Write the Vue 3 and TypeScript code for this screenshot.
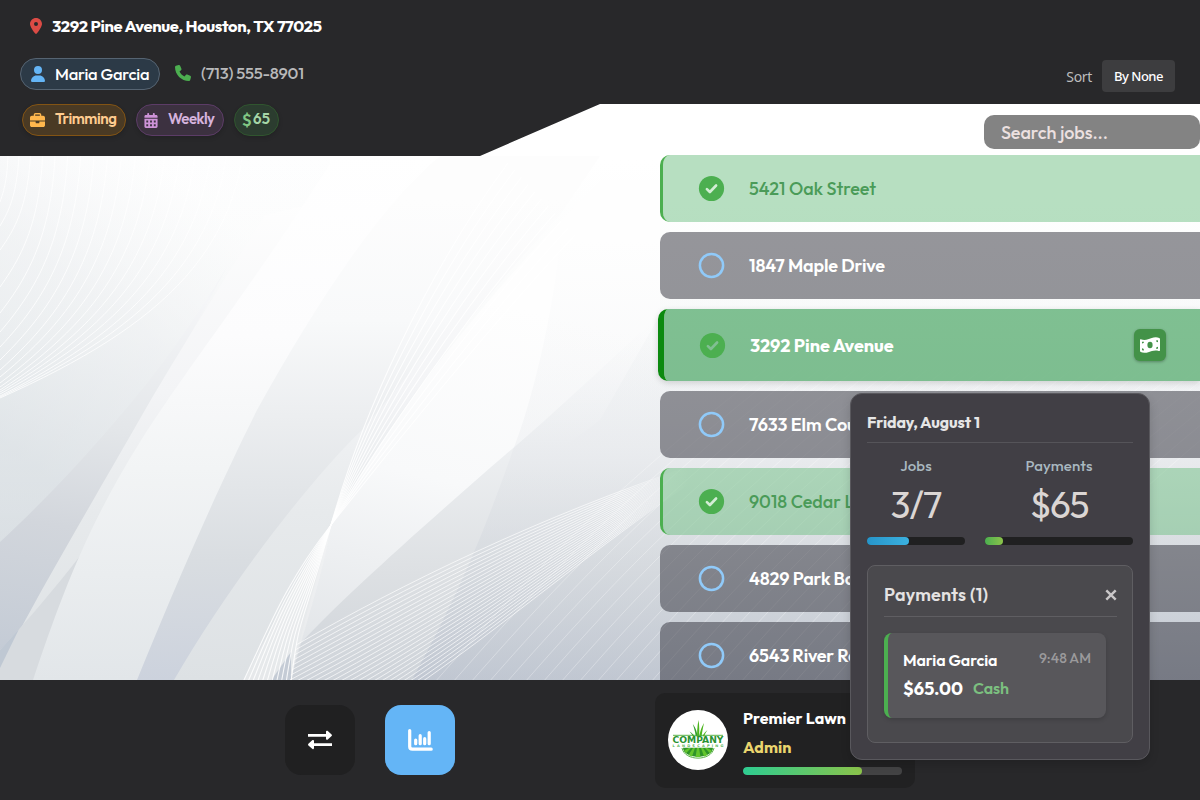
<script setup lang="ts">
interface Job {
  address: string
  width: number
  state: 'done' | 'open' | 'active'
}

const jobs: Job[] = [
  { address: '5421 Oak Street', width: 127, state: 'done' },
  { address: '1847 Maple Drive', width: 136, state: 'open' },
  { address: '3292 Pine Avenue', width: 143.5, state: 'active' },
  { address: '7633 Elm Court', width: 122, state: 'open' },
  { address: '9018 Cedar Lane', width: 135, state: 'done' },
  { address: '4829 Park Boulevard', width: 166, state: 'open' },
  { address: '6543 River Road', width: 130, state: 'open' },
]

// Spreads letter-spacing so that a label takes up the given width.
const vFit = {
  mounted(el: HTMLElement, binding: { value: number }) {
    const count = (el.textContent ?? '').trim().length
    const natural = el.getBoundingClientRect().width
    if (count > 1) {
      el.style.letterSpacing = `${((binding.value - natural) / (count - 1)).toFixed(3)}px`
    }
  },
}

const lerp = (a: number, b: number, t: number): number => a + (b - a) * t
const series = (n: number): number[] => Array.from({ length: n }, (_, i) => i / (n - 1))

// Arcs hanging from the header and gathering on the left edge.
const arcEnds = [202, 226, 250, 287, 313, 332, 347, 360, 370, 377, 383, 387, 390, 392, 394, 396, 397, 398]
const arcs = arcEnds.map((end, i) => {
  const x = 7 + i * 11.5 + i * i * 0.15
  const drop = end - 156
  return `M${x},100 C${x + 4},${156 + drop * 0.38} ${x * 0.66},${156 + drop * 0.7} 0,${end}`
})

// Twisted ribbon crossing itself near the middle of the field.
const ribbon = series(11).map((t) => {
  const tx = lerp(508, 575, t)
  const ty = lerp(163, 235, t)
  const bx = lerp(291, 243, t)
  return `M${tx},${ty} C${lerp(425, 490, t)},${lerp(275, 325, t)} ${lerp(362, 378, t)},${lerp(415, 465, t)} 331,525 S${lerp(300, 268, t)},${lerp(610, 630, t)} ${bx},682`
})

// Dense mesh sweeping from the lower left towards the list.
const mesh = series(25).map((t) => {
  const y = lerp(645, 765, t)
  return `M${lerp(296, 275, t)},${y} C${lerp(400, 425, t)},${lerp(585, 700, t)} ${lerp(540, 520, t)},${lerp(516, 600, t)} 700,${lerp(463, 476, t)}`
})

const rays = Array.from({ length: 30 }, (_, i) => {
  const x = 435 + i * 18
  return `M${x},682 C${x + 85},585 ${x + 170},495 ${x + 330},370`
})

const blades = [
  'M29.600 32C28.500 24 29.300 16 30.500 10C31.500 16 31.500 25 30.800 32Z',
  'M28.500 32C28 25 26.500 19 24.800 14C28.600 19 30.300 26 29.900 32Z',
  'M31 32C31 24 33 18 36 13C34.500 19 33.600 26 32.800 32Z',
  'M27 32C26.500 28 24 24 21.500 21.500C26 24 28 28 28.800 32Z',
  'M33 32C33.500 27 35.500 23 39.500 20C36.500 24 35.200 28 34.800 32Z',
  'M25.500 32C24.500 30 22.800 28.500 20.500 27.500C24.500 28 26.500 30 27.200 32Z',
]
</script>

<template>
  <div class="app">
    <svg class="backdrop" viewBox="0 0 1200 800" aria-hidden="true">
      <defs>
        <linearGradient id="base" x1="0" y1="0" x2="0" y2="1">
          <stop offset="0.2" stop-color="#ffffff" />
          <stop offset="0.42" stop-color="#fafbfb" />
          <stop offset="0.6" stop-color="#eaecef" />
          <stop offset="0.85" stop-color="#cdd1d8" />
        </linearGradient>
        <linearGradient id="left" gradientUnits="userSpaceOnUse" x1="0" y1="440" x2="190" y2="190">
          <stop offset="0" stop-color="#d6dde1" stop-opacity="0.6" />
          <stop offset="0.55" stop-color="#e6e9ec" stop-opacity="0.5" />
          <stop offset="1" stop-color="#f0f2f4" stop-opacity="0.1" />
        </linearGradient>
        <linearGradient id="dark" gradientUnits="userSpaceOnUse" x1="0" y1="200" x2="0" y2="680">
          <stop offset="0" stop-color="#fdfdfd" />
          <stop offset="0.25" stop-color="#f8f9fa" />
          <stop offset="0.45" stop-color="#eceef0" />
          <stop offset="0.75" stop-color="#d9dde1" />
          <stop offset="1" stop-color="#ccd2dd" />
        </linearGradient>
        <linearGradient id="mid" gradientUnits="userSpaceOnUse" x1="0" y1="200" x2="0" y2="680">
          <stop offset="0" stop-color="#fefefe" />
          <stop offset="0.4" stop-color="#f3f4f6" />
          <stop offset="0.65" stop-color="#e7eaec" />
          <stop offset="1" stop-color="#dde1e4" />
        </linearGradient>
        <linearGradient id="pale" gradientUnits="userSpaceOnUse" x1="0" y1="150" x2="0" y2="680">
          <stop offset="0" stop-color="#ffffff" />
          <stop offset="0.35" stop-color="#fcfcfd" />
          <stop offset="0.6" stop-color="#f2f4f5" />
          <stop offset="1" stop-color="#e2e6e9" />
        </linearGradient>
        <linearGradient id="glow" gradientUnits="userSpaceOnUse" x1="480" y1="300" x2="400" y2="660">
          <stop offset="0" stop-color="#fefefe" />
          <stop offset="0.5" stop-color="#f8f9fa" />
          <stop offset="1" stop-color="#e3e6e9" />
        </linearGradient>
        <linearGradient id="lower" gradientUnits="userSpaceOnUse" x1="0" y1="320" x2="0" y2="680">
          <stop offset="0" stop-color="#f9fafb" stop-opacity="0" />
          <stop offset="0.35" stop-color="#eef0f2" />
          <stop offset="0.7" stop-color="#dde0e3" />
          <stop offset="1" stop-color="#ced3d9" />
        </linearGradient>
        <linearGradient id="shade" gradientUnits="userSpaceOnUse" x1="60" y1="280" x2="0" y2="680">
          <stop offset="0" stop-color="#f5f6f8" />
          <stop offset="0.35" stop-color="#e3e6e9" />
          <stop offset="0.6" stop-color="#d2d6dc" />
          <stop offset="1" stop-color="#c1c9d4" />
        </linearGradient>
        <linearGradient id="fall" gradientUnits="userSpaceOnUse" x1="0" y1="240" x2="0" y2="680">
          <stop offset="0" stop-color="#e2e5e9" stop-opacity="0" />
          <stop offset="0.5" stop-color="#dcdfe4" stop-opacity="0.25" />
          <stop offset="0.75" stop-color="#c9cfd7" stop-opacity="0.4" />
          <stop offset="1" stop-color="#b3bbca" stop-opacity="0.5" />
        </linearGradient>
        <linearGradient id="fade" gradientUnits="userSpaceOnUse" x1="620" y1="0" x2="690" y2="0">
          <stop offset="0" stop-color="#ffffff" />
          <stop offset="1" stop-color="#ffffff" stop-opacity="0" />
        </linearGradient>
      </defs>
      <rect width="1200" height="800" fill="url(#base)" />
      <rect width="330" height="560" fill="url(#left)" />
      <path d="M228,265C195,320 158,372 125,410C85,458 40,505 0,542V680H35L150,410Z" fill="url(#shade)" />
      <path d="M265,215C230,270 180,350 145,410C85,515 40,590 0,668V680H60L330,200Z" fill="url(#mid)" />
      <path d="M80,556C55,588 30,618 0,650V680H36Z" fill="#d7dbdf" />
      <path d="M19,629L0,650V668Z" fill="#bfc8d3" />
      <path d="M335,156C250,290 185,370 140,442C85,530 60,600 33,680H150L420,156Z" fill="url(#pale)" />
      <path d="M440,156C375,210 310,315 257,410C205,515 170,600 137,680H250L331,525C380,435 470,310 560,215L600,156Z" fill="url(#dark)" />
      <path d="M500,250C450,325 405,380 362,430C315,475 235,575 174,680H300L331,525C380,435 470,310 560,215Z" fill="url(#mid)" />
      <path d="M600,180C470,310 380,435 331,525C318,575 306,615 299,645L600,420L660,315V180Z" fill="url(#glow)" />
      <path d="M299,645C340,600 430,520 505,455C570,400 620,350 660,315H1200V680H290Z" fill="url(#lower)" />
      <path d="M560,240C555,300 535,395 513,450C480,545 450,610 412,680H1200V240Z" fill="url(#fall)" />
      <path d="M243,682C265,640 290,590 331,525C325,570 300,640 291,682Z" fill="#f5f6f7" opacity="0.35" />
      <path d="M291,652L270,682H291Z" fill="#c4cbd5" />
      <g fill="none" stroke="#ffffff">
        <path v-for="(d, i) in arcs" :key="`a${i}`" :d="d" stroke-width="1" opacity="0.8" />
        <path v-for="(d, i) in ribbon" :key="`r${i}`" :d="d" stroke-width="1.1" opacity="0.85" />
        <path v-for="(d, i) in mesh" :key="`m${i}`" :d="d" stroke="url(#fade)" stroke-width="0.9" opacity="0.75" />
        <path v-for="(d, i) in rays" :key="`y${i}`" :d="d" stroke-width="0.8" opacity="0.38" />
      </g>
    </svg>

    <header class="header">
      <div class="client">
        <div class="address">
          <svg class="pin" viewBox="0 0 384 512"><path fill="#db4b45" d="M215.700 499.200C267 435 384 279.400 384 192C384 86 298 0 192 0S0 86 0 192c0 87.400 117 243 168.300 307.200c12.300 15.300 35.100 15.300 47.400 0zM192 128a64 64 0 1 1 0 128 64 64 0 1 1 0-128z" /></svg>
          <span v-fit="270" class="label">3292 Pine Avenue, Houston, TX 77025</span>
        </div>
        <div class="contact">
          <div class="pill person">
            <svg class="user" viewBox="0 0 448 512"><path fill="#64b5f6" d="M224 256A128 128 0 1 0 224 0a128 128 0 1 0 0 256zm-45.700 48C79.800 304 0 383.800 0 482.300C0 498.700 13.300 512 29.700 512H418.300c16.400 0 29.700-13.300 29.700-29.700C448 383.800 368.200 304 269.700 304H178.300z" /></svg>
            <span v-fit="94.5" class="label">Maria Garcia</span>
          </div>
          <div class="phone">
            <svg viewBox="0 0 512 512"><path fill="#4caf50" d="M164.900 24.600c-7.700-18.600-28-28.500-47.400-23.200l-88 24C12.100 30.200 0 46 0 64C0 311.400 200.600 512 448 512c18 0 33.800-12.100 38.600-29.500l24-88c5.300-19.400-4.600-39.700-23.200-47.400l-96-40c-16.300-6.800-35.200-2.100-46.300 11.600L304.700 368C234.300 334.700 177.300 277.700 144 207.300L193.300 167c13.700-11.200 18.400-30 11.600-46.300l-40-96z" /></svg>
            <span v-fit="103" class="label">(713) 555-8901</span>
          </div>
        </div>
        <div class="tags">
          <div class="pill tag trim">
            <svg class="case" viewBox="0 0 512 512"><path fill="#ffb74d" d="M184 48H328c4.400 0 8 3.600 8 8V96H176V56c0-4.400 3.600-8 8-8zm-56 8V96H64C28.700 96 0 124.700 0 160v96H192 320 512V160c0-35.300-28.700-64-64-64H384V56c0-30.900-25.100-56-56-56H184c-30.900 0-56 25.100-56 56zM512 288H320v32c0 17.700-14.300 32-32 32H224c-17.700 0-32-14.300-32-32V288H0V416c0 35.300 28.700 64 64 64H448c35.300 0 64-28.700 64-64V288z" /></svg>
            <span v-fit="62" class="label">Trimming</span>
          </div>
          <div class="pill tag week">
            <svg class="cal" viewBox="0 0 448 512"><path fill="#ce93d8" fill-rule="evenodd" d="M128 0c17.700 0 32 14.300 32 32V64H288V32c0-17.700 14.300-32 32-32s32 14.300 32 32V64h48c26.500 0 48 21.500 48 48v48H0V112C0 85.500 21.500 64 48 64H96V32c0-17.700 14.300-32 32-32zM0 192H448V464c0 26.500-21.500 48-48 48H48c-26.500 0-48-21.500-48-48ZM64 256v64h64v-64ZM192 256v64h64v-64ZM320 256v64h64v-64ZM64 384v64h64v-64ZM192 384v64h64v-64ZM320 384v64h64v-64Z" /></svg>
            <span v-fit="47" class="label">Weekly</span>
          </div>
          <div class="pill tag price">
            <span class="label currency">$</span>
            <span v-fit="17" class="label">65</span>
          </div>
        </div>
      </div>
      <div class="sort">
        <span v-fit="26" class="label">Sort</span>
        <button type="button"><span v-fit="49.5" class="label">By None</span></button>
      </div>
    </header>

    <main class="main">
      <section class="list">
        <div class="search"><span v-fit="107" class="label">Search jobs...</span></div>
        <article v-for="job in jobs" :key="job.address" :class="['job', job.state]">
          <svg class="status" viewBox="-0.5 -0.5 27 27">
            <template v-if="job.state === 'open'">
              <circle cx="13" cy="13" r="11.600" fill="none" stroke="#90caf9" stroke-width="2.500" />
            </template>
            <template v-else>
              <circle cx="13" cy="13" r="12.600" fill="#4caf50" />
              <path class="tick" d="M8.400 13.600L11.400 16.500L17.600 10" />
            </template>
          </svg>
          <span v-fit="job.width" class="label">{{ job.address }}</span>
          <span v-if="job.state === 'active'" class="cash">
            <svg viewBox="0 0 40 32">
              <path fill="#ffffff" d="M1.500 4.500C10 7.500 17 4.500 22 2.500C29 0 34 0 38.500 2C39.500 2.500 40 3 40 4V26C40 28 39 28.500 37.500 28C30 25.500 23 28 18 30C11 32.500 5 32 1.500 30C.5 29.500 0 29 0 28V6C0 4.500 .5 4 1.500 4.500Z" />
              <ellipse cx="20" cy="16" rx="5.200" ry="6.500" fill="#439248" />
              <path fill="#439248" d="M4 9.500h4c0 2-1.500 3.500-4 3.500zM36 6.500v4c-2.300 0-4-1.500-4-3.500zM4 22.500c2.500 0 4 1.800 4 4.500l-4-.5zM36 19.500v4h-4c0-2.300 1.700-4 4-4z" />
            </svg>
          </span>
        </article>
      </section>
    </main>

    <footer class="footer">
      <button class="tool" type="button" aria-label="Switch">
        <svg viewBox="0 0 24 20" width="24" height="20">
          <path d="M0 5.300H19M5 14.600H24" stroke="#ffffff" stroke-width="2.800" fill="none" />
          <path d="M18 1.800Q18 .3 19.500 .8L23.600 4.500Q24.300 5.300 23.600 6.100L19.500 9.700Q18 10.300 18 8.800ZM6 11.100Q6 9.600 4.500 10.100L.4 13.800Q-.3 14.600 .4 15.400L4.500 19Q6 19.600 6 18.100Z" fill="#ffffff" />
        </svg>
      </button>
      <button class="tool selected" type="button" aria-label="Statistics">
        <svg viewBox="0 0 25 22" width="25" height="22">
          <path d="M1.700 1.600V17.500Q1.700 20.200 4.400 20.200H23.200" stroke="#ffffff" stroke-width="3.200" stroke-linecap="round" fill="none" />
          <path d="M7.700 11V14.700M12.200 6.700V14.700M16.700 9.700V14.700M21.200 3.600V14.700" stroke="#ffffff" stroke-width="3.200" stroke-linecap="round" fill="none" />
        </svg>
      </button>
      <div class="account">
        <svg class="logo" viewBox="0 0 60 60">
          <circle cx="30" cy="30" r="30" fill="#ffffff" />
          <path v-for="(d, i) in blades" :key="i" :d="d" :fill="i % 2 ? '#2f9e2b' : '#4cb51d'" />
          <path d="M15 37.500H45A15 9.500 0 0 1 15 37.500Z" fill="#2f9428" />
          <path d="M29 38L27.500 47H32.500L31 38ZM25 38L20.500 45L24 46.500L27 38ZM35 38L39.500 45L36 46.500L33 38ZM21 38L16.300 40.500L18 43.300L23 38ZM39 38L43.700 40.500L42 43.300L37 38Z" fill="#63c52c" />
          <path d="M5 25.300H55M14 38C16.500 51.500 43.500 51.500 46 38" fill="none" stroke="#49ab35" stroke-width="0.900" />
          <rect x="4" y="26.300" width="52" height="11.200" fill="#ffffff" />
          <text class="brand" x="4.500" y="33" textLength="51" lengthAdjust="spacingAndGlyphs">COMPANY</text>
          <text class="trade" x="4.500" y="37.200" textLength="51">LANDSCAPING</text>
        </svg>
        <div class="who">
          <span v-fit="103" class="label">Premier Lawn</span>
          <span v-fit="48.5" class="label role">Admin</span>
          <div class="meter"><div class="meter-fill"></div></div>
        </div>
      </div>
    </footer>

    <aside class="popup">
      <h2><span v-fit="113" class="label">Friday, August 1</span></h2>
      <div class="stats">
        <div class="stat">
          <span v-fit="31.5" class="label caption">Jobs</span>
          <span v-fit="52" class="label value">3/7</span>
          <div class="bar"><div class="bar-fill jobs-fill"></div></div>
        </div>
        <div class="stat wide">
          <span v-fit="67" class="label caption">Payments</span>
          <span v-fit="60" class="label value">$65</span>
          <div class="bar"><div class="bar-fill pay-fill"></div></div>
        </div>
      </div>
      <div class="payments">
        <div class="payments-head">
          <span v-fit="104" class="label">Payments (1)</span>
          <svg class="close" viewBox="0 0 12 12"><path d="M1.300 1.300L10.700 10.700M10.700 1.300L1.300 10.700" /></svg>
        </div>
        <div class="payment">
          <div class="line">
            <span v-fit="94.5" class="label name">Maria Garcia</span>
            <span v-fit="52" class="label time">9:48 AM</span>
          </div>
          <div class="line second">
            <span v-fit="60" class="label amount">$65.00</span>
            <span v-fit="36" class="label method">Cash</span>
          </div>
        </div>
      </div>
    </aside>
  </div>
</template>

<style>
body {
  margin: 0;
  background: #28282a;
}
</style>

<style scoped>
.app {
  position: relative;
  display: flex;
  flex-direction: column;
  width: 1200px;
  height: 800px;
  overflow: hidden;
  font-family: Outfit, Lato, sans-serif;
  font-size: 16px;
  color: #fff;
}
.app * {
  box-sizing: border-box;
}
.label {
  display: inline-block;
  flex: none;
  align-self: center;
  white-space: nowrap;
}
.backdrop {
  position: absolute;
  inset: 0;
  width: 1200px;
  height: 800px;
}
.header {
  position: relative;
  z-index: 2;
  display: flex;
  justify-content: space-between;
  flex: none;
  height: 156px;
  margin-bottom: -52px;
  background: #28282a;
  clip-path: polygon(0 0, 100% 0, 100% 104px, 600px 104px, 480px 100%, 0 100%);
}
.client {
  padding: 14px 0 0 20px;
}
.address {
  display: flex;
  align-items: center;
  height: 24px;
  padding-left: 10px;
  gap: 10px;
  font-weight: 700;
  font-size: 16.500px;
}
.address .label,
.contact .label {
  margin-top: -2px;
}
.pin {
  width: 12px;
  height: 16px;
}
.contact {
  display: flex;
  align-items: center;
  height: 32px;
  margin-top: 20px;
  gap: 15px;
  font-size: 16.500px;
}
.pill {
  display: flex;
  align-items: center;
  height: 32px;
  padding-left: 10px;
  gap: 10px;
  border: 1px solid #566472;
  border-radius: 16px;
}
.person {
  width: 140px;
  background: #2c3a47;
  font-weight: 500;
}
.user {
  width: 14px;
  height: 16px;
}
.phone {
  display: flex;
  align-items: center;
  gap: 10px;
  margin-top: -2px;
  font-weight: 500;
  color: #b9b9ba;
}
.phone svg {
  width: 16px;
  height: 16px;
}
.tags {
  display: flex;
  margin: 14px 0 0 2px;
  gap: 10px;
  font-size: 15px;
  font-weight: 600;
}
.tag {
  padding-left: 7px;
  box-shadow: 0 2px 4px rgba(0, 0, 0, 0.15);
}
.tag .label {
  margin-top: -3px;
}
.trim {
  width: 104px;
  background: #4a3a24;
  border-color: #835414;
  color: #ffcc90;
}
.week {
  width: 88px;
  background: #3c3140;
  border-color: #5c3c67;
  color: #d6b3dd;
}
.price {
  width: 45px;
  gap: 3px;
  background: #2b3c2f;
  border-color: #30552f;
  color: #a5d6a7;
}
.price .currency {
  width: 8px;
  margin-top: -2px;
  font-size: 16.500px;
  color: #81c784;
}
.case {
  width: 15px;
  height: 15px;
}
.cal {
  width: 14px;
  height: 15px;
}
.sort {
  display: flex;
  align-items: center;
  height: 32px;
  margin: 60px 25px 0 0;
  gap: 10px;
  font-family: 'Noto Sans', sans-serif;
  font-size: 14px;
  color: #bdbdbe;
}
.sort button {
  width: 73px;
  height: 32px;
  padding: 0;
  border: 0;
  border-radius: 4px;
  background: #3d3d3f;
  font: 500 13px 'Noto Sans', sans-serif;
  color: #fff;
}
.main {
  position: relative;
  display: flex;
  justify-content: flex-end;
  flex: none;
  height: 576px;
  overflow: hidden;
}
.list {
  display: flex;
  flex-direction: column;
  width: 540px;
  padding-top: 11px;
}
.search {
  display: flex;
  align-items: center;
  align-self: flex-end;
  flex: none;
  width: 216px;
  height: 34px;
  margin-bottom: 6px;
  padding-left: 17px;
  border-radius: 10px;
  background: #838383;
  font-size: 18px;
  font-weight: 500;
  color: #ece0e0;
}
.job {
  display: flex;
  align-items: center;
  flex: none;
  height: 67px;
  margin-bottom: 10px;
  padding-left: 38px;
  border-radius: 10px 0 0 10px;
  background: rgba(49, 49, 59, 0.51);
  font-size: 18px;
  font-weight: 600;
}
.status {
  flex: none;
  width: 27px;
  height: 27px;
  margin-right: 24px;
}
.tick {
  fill: none;
  stroke: #d3edd5;
  stroke-width: 2.600;
  stroke-linecap: round;
  stroke-linejoin: round;
}
.done {
  padding-left: 35px;
  border-left: 3px solid #4caf50;
  background: rgba(111, 191, 131, 0.5);
  background-clip: padding-box;
  color: #4a9b58;
  font-weight: 500;
}
.active {
  height: 72px;
  margin-left: -2px;
  padding-left: 35px;
  border-left: 6px solid #0c8a10;
  background: rgba(76, 166, 101, 0.7);
  background-clip: padding-box;
  box-shadow: 0 2px 6px rgba(0, 0, 0, 0.15);
  font-weight: 700;
}
.active .tick {
  stroke: #80bf92;
}
.cash {
  display: flex;
  align-items: center;
  justify-content: center;
  width: 32px;
  height: 32px;
  margin: 0 34px 0 auto;
  border-radius: 6px;
  background: #439248;
  box-shadow: 0 1px 3px rgba(0, 0, 0, 0.3);
}
.cash svg {
  width: 20px;
  height: 16px;
}
.footer {
  position: relative;
  display: flex;
  flex: none;
  height: 120px;
  padding-left: 285px;
  background: #28282a;
}
.tool {
  display: flex;
  align-items: center;
  justify-content: center;
  width: 70px;
  height: 70px;
  margin: 25px 30px 0 0;
  padding: 0;
  border: 0;
  border-radius: 16px;
  background: #202021;
}
.selected {
  background: #64b5f6;
}
.account {
  display: flex;
  width: 260px;
  height: 95px;
  margin: 13px 0 0 170px;
  padding: 17px 13px 0;
  gap: 15px;
  border-radius: 10px;
  background: #212122;
}
.logo {
  flex: none;
  width: 60px;
  height: 60px;
}
.brand {
  font: 700 8px 'DejaVu Sans', sans-serif;
  fill: #2a9232;
}
.trade {
  font: 700 3.600px 'DejaVu Sans', sans-serif;
  fill: #5bb558;
}
.who {
  display: flex;
  flex-direction: column;
  width: 159px;
  font-weight: 700;
}
.who .label {
  align-self: flex-start;
  height: 29px;
  line-height: 16px;
}
.who .role {
  height: 28px;
  color: #ead56e;
}
.meter {
  height: 8px;
  overflow: hidden;
  border-radius: 4px;
  background: #434344;
}
.meter-fill {
  width: 75%;
  height: 8px;
  border-radius: 4px;
  background: linear-gradient(90deg, #2ecc91, #8bc34a);
}
.popup {
  position: absolute;
  z-index: 3;
  left: 850px;
  top: 393px;
  width: 300px;
  height: 367px;
  padding: 16px;
  border: 1px solid #59585d;
  border-radius: 12px;
  background: #413f45;
  box-shadow: 0 4px 10px rgba(0, 0, 0, 0.15);
}
.popup h2 {
  height: 33px;
  margin: 0;
  border-bottom: 1px solid #555459;
  font-size: 16px;
  font-weight: 700;
  line-height: 25px;
  color: #e6e6e6;
}
.stats {
  display: flex;
  gap: 20px;
}
.stat {
  display: flex;
  flex-direction: column;
  width: 98px;
  padding-top: 12px;
}
.wide {
  width: 148px;
}
.caption {
  height: 22px;
  font-size: 15px;
  font-weight: 500;
  line-height: 22px;
  color: #a9b8c0;
}
.value {
  height: 60px;
  font-size: 37px;
  line-height: 55px;
  color: #dbd6d4;
}
.bar {
  height: 8px;
  border-radius: 4px;
  background: #202021;
}
.bar-fill {
  height: 8px;
  border-radius: 4px;
}
.jobs-fill {
  width: 42px;
  background: linear-gradient(90deg, #2795c9, #3bb1e0);
}
.pay-fill {
  width: 18px;
  background: linear-gradient(90deg, #4caf50, #8bc34a);
}
.payments {
  height: 178px;
  margin-top: 20px;
  padding: 0 15px 0 16px;
  border: 1px solid #5f5e62;
  border-radius: 8px;
  background: #4a494d;
}
.payments-head {
  display: flex;
  align-items: center;
  justify-content: space-between;
  height: 51px;
  padding: 7px 0 0;
  border-bottom: 1px solid #5f5e62;
  font-size: 18px;
  font-weight: 600;
  color: #e4e2e2;
}
.close {
  width: 12px;
  height: 12px;
  fill: none;
  stroke: #c9c7c8;
  stroke-width: 2.400;
}
.payment {
  width: 222px;
  height: 85px;
  margin-top: 16px;
  padding: 14px 15px;
  border-left: 4px solid #4caf50;
  border-radius: 8px;
  background: #58575b;
  box-shadow: 0 2px 4px rgba(0, 0, 0, 0.15);
}
.line {
  display: flex;
  justify-content: space-between;
  height: 26px;
}
.second {
  justify-content: flex-start;
  height: 31px;
  gap: 10px;
}
.name {
  font-weight: 600;
}
.time {
  margin-top: -4px;
  font-size: 14px;
  font-weight: 500;
  color: #9b9a9c;
}
.amount {
  font-size: 18px;
  font-weight: 700;
}
.method {
  margin-top: -2px;
  font-weight: 600;
  color: #7cc080;
}
</style>
